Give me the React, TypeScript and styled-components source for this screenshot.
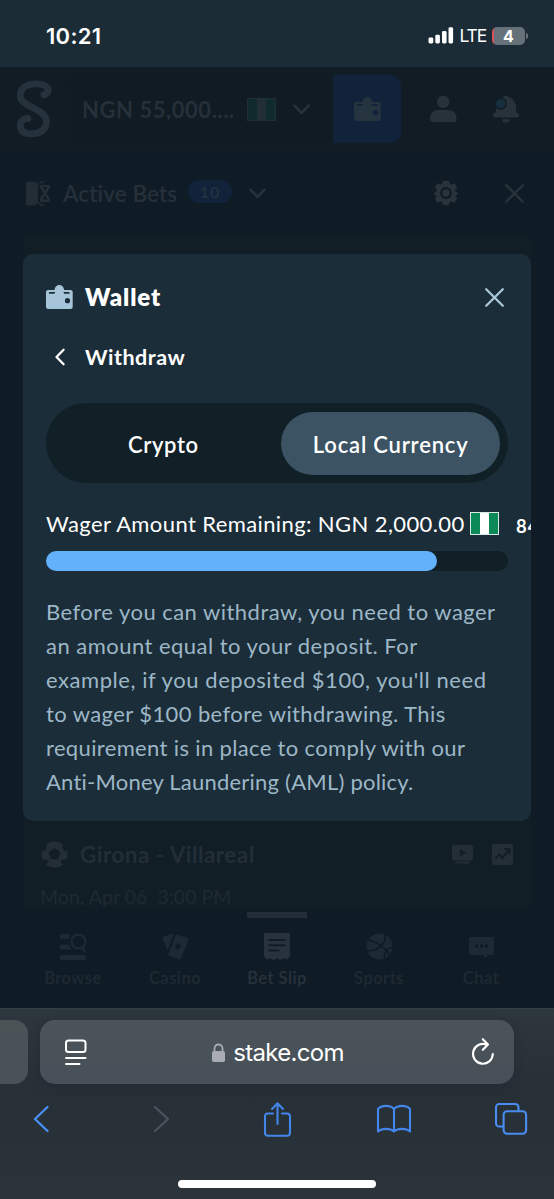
import React from "react";
import styled, { createGlobalStyle } from "styled-components";

const Global = createGlobalStyle`
  * { box-sizing: border-box; }
  body { margin: 0; background: #101c25; }
  svg { display: block; flex: none; overflow: visible; }
`;

const Screen = styled.div`
  width: 554px;
  height: 1199px;
  overflow: hidden;
  display: flex;
  flex-direction: column;
  font-family: Lato, "Open Sans", sans-serif;
  color: #fff;
`;

const Label = styled.span<{ $size: number; $weight?: number; $spacing?: number; $color?: string }>`
  flex: none;
  font-size: ${(p) => p.$size}px;
  font-weight: ${(p) => p.$weight ?? 400};
  letter-spacing: ${(p) => p.$spacing ?? 0}px;
  color: ${(p) => p.$color ?? "#fff"};
  line-height: 1.2;
  white-space: pre;
`;

/* Status bar */
const StatusBar = styled.header`
  height: 67px;
  flex: none;
  background: #1b2c37;
  display: flex;
  align-items: center;
  padding: 4px 26px 0 46px;
`;
const Clock = styled.span`
  flex: 1;
  font: 600 22px/26px Inter, sans-serif;
  letter-spacing: 0.3px;
`;
const Network = styled.span`
  font: 400 17.5px/22px Inter, sans-serif;
  letter-spacing: -1.2px;
  margin: 1px 6px 0 6px;
`;
const Battery = styled.span`
  width: 33px;
  height: 18px;
  border-radius: 5px;
  background: linear-gradient(90deg, #d9515c 2px, #66717a 2px);
  font: 700 16px/18px Inter, sans-serif;
  text-align: center;
`;
const BatteryTip = styled.span`
  width: 2px;
  height: 6px;
  margin-left: 1px;
  border-radius: 0 2px 2px 0;
  background: #66717a;
`;

/* Dimmed page */
const Stage = styled.main`
  position: relative;
  height: 941px;
  flex: none;
  display: flex;
  flex-direction: column;
  background: #101c25;
`;
const TopBar = styled.div`
  height: 86px;
  flex: none;
  display: flex;
  align-items: center;
  padding: 0 0 2px 15px;
  background: #111c25;
`;
const Balance = styled.div`
  width: 265px;
  height: 68px;
  margin-left: 16px;
  padding-left: 14px;
  display: flex;
  align-items: center;
  background: #101b23;
  border-radius: 8px 0 0 8px;
`;
const BalanceText = styled(Label)`
  width: 165px;
  padding-top: 3px;
`;
const WalletButton = styled.div`
  width: 68px;
  height: 68px;
  border-radius: 0 10px 10px 0;
  background: #10233a;
  display: flex;
  align-items: center;
  justify-content: center;
`;
const Flag = styled.span<{ $dim?: boolean }>`
  width: 29px;
  height: 23px;
  flex: none;
  margin-right: 17px;
  border: 1px solid ${(p) => (p.$dim ? "#1d3035" : "#d8eae3")};
  background: linear-gradient(
    90deg,
    ${(p) => (p.$dim ? "#112a2d" : "#0b8a58")} 33.3%,
    ${(p) => (p.$dim ? "#222d36" : "#fff")} 33.3% 66.6%,
    ${(p) => (p.$dim ? "#112a2d" : "#0b8a58")} 66.6%
  );
`;
const BetsBar = styled.div`
  height: 84px;
  flex: none;
  display: flex;
  align-items: center;
  padding: 0 30px 4px 26px;
`;
const BetsTitle = styled(Label)`
  width: 125px;
  margin-left: 12px;
`;
const Count = styled.span`
  width: 44px;
  height: 23px;
  margin: 0 17px 3px 0;
  border-radius: 12px;
  background: #10233a;
  color: #24313f;
  font-size: 16px;
  font-weight: 700;
  line-height: 23px;
  letter-spacing: 1px;
  text-align: center;
`;
const Spacer = styled.span`
  flex: 1;
`;
const BetList = styled.section`
  flex: 1;
  min-height: 0;
  margin: 0 23px;
  display: flex;
  flex-direction: column;
  justify-content: flex-end;
  background: #111e26;
  overflow: hidden;
`;
const Fixture = styled.div`
  display: flex;
  align-items: center;
  height: 34px;
  padding: 0 18px 0 18px;
`;
const FixtureName = styled(Label)`
  flex: 1;
  margin-left: 12px;
  padding-top: 1px;
`;
const Kickoff = styled.div`
  height: 36px;
  padding: 14px 0 0 17px;
  line-height: 24px;
`;
const Nav = styled.nav`
  height: 101px;
  flex: none;
  display: flex;
  padding: 0 22px 0 22px;
  background: #101c25;
`;
const NavItem = styled.div<{ $active?: boolean }>`
  flex: 1;
  display: flex;
  flex-direction: column;
  align-items: center;
  color: ${(p) => (p.$active ? "#27323c" : "#1e2a33")};
  &::before {
    content: "";
    width: 60px;
    height: 6px;
    margin: 5px 0 15px;
    background: ${(p) => (p.$active ? "#222d37" : "transparent")};
  }
`;
const NavText = styled.span`
  margin-top: 8px;
  font-size: 16.5px;
  font-weight: 600;
  line-height: 20px;
  white-space: nowrap;
  letter-spacing: 0.5px;
`;

/* Wallet dialog */
const Overlay = styled.div`
  position: absolute;
  inset: 0;
  padding: 187px 23px 0;
`;
const Dialog = styled.div`
  height: 567px;
  border-radius: 10px;
  background: #1b2d38;
  padding: 23px 23px 0;
  overflow: hidden;
  display: flex;
  flex-direction: column;
`;
const DialogHead = styled.div`
  height: 40px;
  flex: none;
  display: flex;
  align-items: center;
  justify-content: space-between;
  padding-right: 4px;
`;
const Title = styled.div`
  display: flex;
  align-items: center;
  gap: 12px;
`;
const BackRow = styled.div`
  height: 40px;
  flex: none;
  margin-top: 20px;
  padding: 1px 0 0 9px;
  display: flex;
  align-items: center;
  gap: 20px;
`;
const Tabs = styled.div`
  height: 80px;
  flex: none;
  margin: 26px 0 0 -0.5px;
  padding: 9px 8px 8px;
  border-radius: 40px;
  background: #112027;
  display: flex;
`;
const Tab = styled.div<{ $active?: boolean }>`
  width: ${(p) => (p.$active ? 219 : 228)}px;
  height: 62.5px;
  padding: 3px ${(p) => (p.$active ? 0 : 8)}px 0 0;
  border-radius: 32px;
  background: ${(p) => (p.$active ? "#3b5363" : "transparent")};
  display: flex;
  align-items: center;
  justify-content: center;
`;
const WagerRow = styled.div`
  height: 30px;
  flex: none;
  margin-top: 25px;
  display: flex;
  align-items: center;
`;
const WagerText = styled(Label)`
  width: 424px;
  padding-top: 2px;
`;
const Percent = styled(Label)`
  padding-top: 6px;
`;
const Track = styled.div`
  height: 20px;
  flex: none;
  margin-top: 13px;
  border-radius: 10px;
  background: #112027;
`;
const Fill = styled.div`
  height: 20px;
  border-radius: 10px;
  background: #63b0fb;
`;
const Notice = styled.p`
  margin: 24px 0 0;
  color: #9db7c7;
  font-size: 22px;
  line-height: 34px;
`;
const Line = styled.span<{ $spacing: number }>`
  display: block;
  white-space: nowrap;
  letter-spacing: ${(p) => p.$spacing}px;
`;

/* Browser chrome */
const Browser = styled.footer`
  height: 191px;
  flex: none;
  border-top: 1px solid #333f47;
  background: linear-gradient(#2d373d, #272f37 45%, #2a343a);
  display: flex;
  flex-direction: column;
`;
const AddressRow = styled.div`
  display: flex;
  gap: 12px;
  margin-top: 11px;
`;
const PreviousTab = styled.div`
  width: 28px;
  height: 64px;
  border-radius: 0 14px 14px 0;
  background: linear-gradient(#4b5357, #495159);
`;
const Address = styled.div`
  width: 474px;
  height: 64px;
  border-radius: 15px;
  background: linear-gradient(#4b5459, #475058);
  display: flex;
  align-items: center;
  justify-content: space-between;
  padding: 0 20px 0 24px;
  box-shadow: 0 2px 10px rgba(20, 28, 36, 0.25);
`;
const Host = styled.span`
  display: flex;
  align-items: center;
  gap: 8px;
  padding: 1px 3px 0 0;
  font: 400 24px/30px Inter, sans-serif;
  letter-spacing: -0.7px;
`;
const Tools = styled.div`
  display: flex;
  align-items: center;
  justify-content: space-between;
  height: 72px;
  padding: 0 26px 2px 24px;
`;
const Tool = styled.div<{ $nudge?: number }>`
  width: 34px;
  padding-left: ${(p) => p.$nudge ?? 0}px;
  display: flex;
  justify-content: center;
`;
const HomeBar = styled.div`
  width: 198px;
  height: 8px;
  border-radius: 4px;
  background: #fff;
  margin: 24px 0 0 178px;
`;

const WalletIcon = ({ fill, hole }: { fill: string; hole: string }) => (
  <svg width="27" height="24" viewBox="0 0 27 24">
    <path d="M2.200 5h22.300q2.200 0 2.200 2.200v14.500q0 2.300-2.200 2.300H2.200Q0 24 0 21.700V7.200Q0 5 2.200 5z" fill={fill} />
    <path d="M3.600 7h19.200q.8 0 .8.900t-.8.900H3.600q-.8 0-.8-.9t.8-.9z" fill={hole} />
    <circle cx="13.300" cy="4.700" r="4.700" fill={fill} />
    <path d="M9.400 6.500h7.800l1 2.500H8.400z" fill={fill} />
    <circle cx="21.500" cy="15.700" r="2.600" fill={hole} />
  </svg>
);
const Cross = ({ color }: { color: string }) => (
  <svg width="19" height="19" viewBox="0 0 19 19" fill="none" stroke={color} strokeWidth="2.300" strokeLinecap="round">
    <path d="M1.200 1.200l16.600 16.600M17.800 1.200L1.200 17.800" />
  </svg>
);
const ChevronDown = () => (
  <svg width="17" height="11" viewBox="0 0 17 11" fill="none" stroke="#28343d" strokeWidth="2.400" strokeLinecap="round" strokeLinejoin="round">
    <path d="M1.400 1.600l7.100 7.200 7.100-7.200" />
  </svg>
);

const dim = "#28333c";
const bg = "#101c25";

export default function App() {
  return (
    <>
      <Global />
      <Screen>
        <StatusBar>
          <Clock>10:21</Clock>
          <svg width="26" height="17" viewBox="0 0 26 17" fill="#fff">
            <rect x="0.500" y="10.500" width="4.800" height="6" rx="1.400" />
            <rect x="7.300" y="7.700" width="4.600" height="8.800" rx="1.400" />
            <rect x="14" y="4" width="4.600" height="12.500" rx="1.400" />
            <rect x="20.500" y="0.300" width="4.600" height="16.200" rx="1.400" />
          </svg>
          <Network>LTE</Network>
          <Battery>4</Battery>
          <BatteryTip />
        </StatusBar>

        <Stage>
          <TopBar>
            <svg width="37" height="58" viewBox="0 0 37 58" fill="none" stroke="#26323b" strokeWidth="6.800" strokeLinecap="round" strokeLinejoin="round">
              <path d="M29 14.800C36 13 35 3.800 21 3.800C10 3.800 5.200 9 5.200 16C5.200 27 32 29 31.500 41.500C31 50 25 53.800 15.500 53.800C8 53.800 5.200 50 5.200 46C5.200 41 8.500 38.500 13 38.500" />
            </svg>
            <Balance>
              <BalanceText $size={22} $weight={700} $spacing={0.55} $color="#25303a">NGN 55,000....</BalanceText>
              <Flag $dim />
              <ChevronDown />
            </Balance>
            <WalletButton>
              <WalletIcon fill="#26343f" hole="#10233a" />
            </WalletButton>
            <svg width="27" height="28" viewBox="0 0 27 28" fill="#27323a" style={{ marginLeft: 29 }}>
              <circle cx="13.200" cy="6.800" r="6.200" />
              <path d="M0 24C0 18 4 15 9 15h9c5 0 8.500 3 8.500 9q0 3-2.500 3H2.500Q0 27 0 24z" />
            </svg>
            <svg width="26" height="28" viewBox="0 0 26 28" fill="#27323a" style={{ marginLeft: 36 }}>
              <path d="M11 1.800Q13-.8 15 1.800C20.500 3.500 23 8 23 12v5.500q3 .5 3 2.700T23.500 22.500h-21Q0 22.500 0 20.200t3-2.700V12C3 8 5.500 3.500 11 1.800z" />
              <path d="M9 24.300h8Q16.500 27.800 13 27.800T9 24.300z" />
              <circle cx="7.800" cy="8.600" r="6.200" fill={bg} />
              <circle cx="7.800" cy="8.600" r="4.700" fill="#17303f" />
            </svg>
          </TopBar>

          <BetsBar>
            <svg width="25" height="25" viewBox="0 0 25 25" fill="#222d36">
              <path d="M0 0l2 1.500L4 0l2 1.500L8 0l2 2h2v21h-2l-2 2-2-1.500L4 25l-2-1.500L0 25z" />
              <path d="M12 3l3.500-3h2v2h-2L13.500 4zM12 22l3.500 3h2v-2h-2L13.500 21zM14 4h10v3l-3.500 5.500L24 17v4H14v-4l3.500-4.500L14 7z" />
              <path d="M16.500 6h5L19 9.500zM16.500 18.500L19 14.500l2.500 4z" fill={bg} />
            </svg>
            <BetsTitle $size={22.5} $weight={600} $spacing={0.1} $color="#25303a">Active Bets</BetsTitle>
            <Count>10</Count>
            <ChevronDown />
            <Spacer />
            <svg width="24" height="24" viewBox="0 0 24 24" fill={dim} style={{ marginRight: 47 }}>
              <path d="M9 0h6l.8 3 1.800.8L20.300 2l2.900 4.500-2 2.300.3 2L24 12l-.3 1.200-2.500 2 2 2.300L20.300 22l-2.700-1.700-1.800.8L15 24H9l-.8-2.900-1.800-.8L3.700 22 .8 17.500l2-2.300-2.500-2L0 12l2.500-1.200.3-2-2-2.300L3.700 2l2.700 1.800L8.200 3z" />
              <circle cx="12" cy="12" r="4.800" fill="none" stroke={bg} strokeWidth="2.300" />
            </svg>
            <Cross color={dim} />
          </BetsBar>

          <BetList>
            <Fixture>
              <svg width="27" height="27" viewBox="0 0 27 27" fill="#232e37">
                <circle cx="13.500" cy="13.500" r="13" />
                <path d="M13.500 7l6 4.500-2.300 6.800h-7.400l-2.300-6.800z" fill="#111e26" />
                <path d="M1 5.500L6 4 5 8.500 2 11zM26 5.500L21 4l1 4.500 3 2.500zM1 18.500l6.500.500L7 22l-3.500 1.500zM26 18.500l-6.500.500.500 3 3.500 1.500z" fill="#111e26" />
              </svg>
              <FixtureName $size={22.5} $weight={700} $spacing={0.45} $color="#222e37">Girona - Villareal</FixtureName>
              <svg width="21" height="19" viewBox="0 0 21 19" fill="#232e37">
                <rect width="21" height="15.500" rx="2" />
                <rect x="3" y="16.500" width="15" height="2" rx="1" />
                <path d="M8 4l6 3.800L8 11.500z" fill="#111e26" />
              </svg>
              <svg width="21" height="21" viewBox="0 0 21 21" fill="#232e37" style={{ marginLeft: 19 }}>
                <rect width="21" height="21" rx="2" />
                <path d="M3.500 14.500l4-4 3 3.500 6-7.500M12 5h5.500v5.500" fill="none" stroke="#111e26" strokeWidth="1.800" />
              </svg>
            </Fixture>
            <Kickoff>
              <Label $size={19.5} $spacing={0.05} $color="#1e2a33">{"Mon, Apr 06  3:00 PM"}</Label>
            </Kickoff>
          </BetList>

          <Nav>
            <NavItem>
              <svg width="27" height="27" viewBox="0 0 27 27" fill="currentColor">
                <path d="M1.500 1H10L8.500 6h-7Q0 6 0 4.500v-2Q0 1 1.500 1zM1.500 11.500h7l3 5h-10Q0 16.500 0 15v-2q0-1.500 1.500-1.500z" />
                <rect y="22" width="26" height="5" rx="1.500" />
                <circle cx="18.500" cy="8.500" r="6.900" fill="none" stroke="currentColor" strokeWidth="2.400" />
                <path d="M22 14l3 4.500" stroke="currentColor" strokeWidth="3" />
              </svg>
              <NavText>Browse</NavText>
            </NavItem>
            <NavItem>
              <svg width="27" height="27" viewBox="0 0 27 27" fill="currentColor">
                <path d="M1.500 3.500L12 .5 5.500 18 .5 5.500Q0 4 1.500 3.500z" />
                <path d="M14.500 1.500l10.500 3q2 .6 1.500 2.500L19 25.500q-.6 1.500-2.500 1l-9.500-4q-1.500-.7-1-2.500l6.500-17.500q.6-1.500 2-1z" />
                <path d="M13.700 .5L6 20.500" stroke={bg} strokeWidth="1.200" />
                <path d="M16.500 9.500l2.500 4-3.500 4-2.500-4z" fill={bg} />
              </svg>
              <NavText>Casino</NavText>
            </NavItem>
            <NavItem $active>
              <svg width="26" height="27" viewBox="0 0 26 27" fill="currentColor">
                <path d="M0 0h26v23.500l-3 3-3.300-1.300L16.400 27 13 25.200 9.600 27l-3.300-1.800L3 26.500l-3-3z" />
                <path d="M4.500 7h17M4.500 12.300h17M4.500 17.500h11" stroke={bg} strokeWidth="2" />
              </svg>
              <NavText>Bet Slip</NavText>
            </NavItem>
            <NavItem>
              <svg width="27" height="27" viewBox="0 0 27 27" fill="currentColor">
                <circle cx="13.500" cy="13.500" r="13" />
                <path d="M1.500 7.500C8 7 19 14 23.500 22M18.500 0c3.500 9-6 19-18 17.500M27 14.500c-6 0-9.500 5-8.500 12" fill="none" stroke={bg} strokeWidth="1.700" />
              </svg>
              <NavText>Sports</NavText>
            </NavItem>
            <NavItem>
              <svg width="25" height="27" viewBox="0 0 25 27" fill="currentColor">
                <path d="M2 4h21q2 0 2 2v14q0 2-2 2h-3.500L15 26v-4H2q-2 0-2-2V6q0-2 2-2z" />
                <path d="M6 11.500h3v3H6zM11 11.500h3v3h-3zM16 11.500h3v3h-3z" fill={bg} />
              </svg>
              <NavText>Chat</NavText>
            </NavItem>
          </Nav>

          <Overlay>
            <Dialog>
              <DialogHead>
                <Title>
                  <WalletIcon fill="#a6c5d8" hole="#1b2d38" />
                  <Label $size={24} $weight={800} $spacing={0.85}>Wallet</Label>
                </Title>
                <Cross color="#a9c7d9" />
              </DialogHead>
              <BackRow>
                <svg width="10" height="17" viewBox="0 0 10 17" fill="none" stroke="#fff" strokeWidth="2.300" strokeLinecap="round" strokeLinejoin="round">
                  <path d="M8.600 .700L1.500 8l7.100 7.300" />
                </svg>
                <Label $size={21.5} $weight={700} $spacing={0.5}>Withdraw</Label>
              </BackRow>
              <Tabs>
                <Tab><Label $size={22} $weight={600} $spacing={0.6}>Crypto</Label></Tab>
                <Tab $active><Label $size={22} $weight={600} $spacing={0.8}>Local Currency</Label></Tab>
              </Tabs>
              <WagerRow>
                <WagerText $size={22} $spacing={0.39}>Wager Amount Remaining: NGN 2,000.00</WagerText>
                <Flag />
                <Percent $size={18.5} $weight={700} $spacing={1}>84.00%</Percent>
              </WagerRow>
              <Track><Fill style={{ width: "84.6%" }} /></Track>
              <Notice>
                <Line $spacing={0.47}>Before you can withdraw, you need to wager</Line>
                <Line $spacing={0.47}>an amount equal to your deposit. For</Line>
                <Line $spacing={0.56}>example, if you deposited $100, you'll need</Line>
                <Line $spacing={0.4}>to wager $100 before withdrawing. This</Line>
                <Line $spacing={0.35}>requirement is in place to comply with our</Line>
                <Line $spacing={0.22}>Anti-Money Laundering (AML) policy.</Line>
              </Notice>
            </Dialog>
          </Overlay>
        </Stage>

        <Browser>
          <AddressRow>
            <PreviousTab />
            <Address>
              <svg width="23" height="27" viewBox="0 0 23 27" fill="none" stroke="#fff" strokeWidth="2" strokeLinecap="round">
                <rect x="2" y="1.500" width="19.500" height="11.500" rx="2.500" />
                <path d="M2 19h19.500M2 25h13.500" />
              </svg>
              <Host>
                <svg width="13" height="20" viewBox="0 0 13 20">
                  <rect y="8" width="13" height="11" rx="1.800" fill="#a9acb5" />
                  <path d="M2.500 9V5.500a4 4 0 0 1 8 0V9" fill="none" stroke="#a9acb5" strokeWidth="1.800" />
                </svg>
                stake.com
              </Host>
              <svg width="22" height="27" viewBox="0 0 22 27" fill="none" stroke="#fff" strokeWidth="2.100" strokeLinecap="round" strokeLinejoin="round">
                <path d="M14.500 5.600A9.900 9.900 0 1 0 20.800 15M10.800 .200l5.200 5.400-5.200 5.200" />
              </svg>
            </Address>
          </AddressRow>
          <Tools>
            <Tool>
              <svg width="15" height="26" viewBox="0 0 15 26" fill="none" stroke="#4a90f4" strokeWidth="2.300" strokeLinecap="round" strokeLinejoin="round">
                <path d="M13.500 1L1 13l12.500 12" />
              </svg>
            </Tool>
            <Tool $nudge={6}>
              <svg width="15" height="26" viewBox="0 0 15 26" fill="none" stroke="#4b535c" strokeWidth="2.200" strokeLinecap="round" strokeLinejoin="round">
                <path d="M1 1l13 12L1 25" />
              </svg>
            </Tool>
            <Tool $nudge={2}>
              <svg width="27" height="35" viewBox="0 0 27 35" fill="none" stroke="#4286ec" strokeWidth="2.100" strokeLinecap="round" strokeLinejoin="round">
                <path d="M9 11.500H4q-3 0-3 3v16q0 3.300 3 3.300h19q3 0 3-3.300v-16q0-3-3-3h-5M13.500 22V1.500M8 7l5.500-5.700L19 7" />
              </svg>
            </Tool>
            <Tool>
              <svg width="34" height="28" viewBox="0 0 34 28" fill="none" stroke="#4286ec" strokeWidth="2.100" strokeLinecap="round" strokeLinejoin="round">
                <path d="M17 4C13.500-.2 4.500-.2 1 4v22.500c4-3.500 12-3.500 16 0 4-3.500 12-3.500 16 0V4C29.500-.2 20.500-.2 17 4zM17 4v22.500" />
              </svg>
            </Tool>
            <Tool>
              <svg width="32" height="32" viewBox="0 0 32 32" fill="none" stroke="#4a8cf0" strokeWidth="2.100" strokeLinejoin="round">
                <rect x="8.600" y="8.200" width="22.500" height="22.500" rx="3.500" />
                <path d="M8.500 23.500H4.500q-3.500 0-3.500-3.500V4.500Q1 1 4.500 1H20q3.500 0 3.500 3.500v3.500" />
              </svg>
            </Tool>
          </Tools>
          <HomeBar />
        </Browser>
      </Screen>
    </>
  );
}
